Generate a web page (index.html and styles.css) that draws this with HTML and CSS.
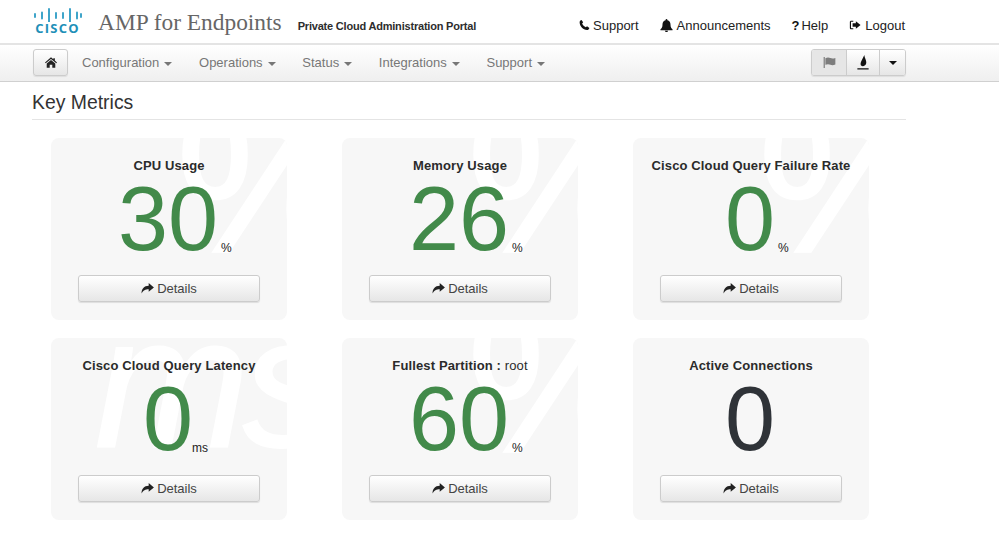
FILE: index.html
```html
<!DOCTYPE html>
<html lang="en">
<head>
<meta charset="utf-8">
<title>Key Metrics</title>
<link rel="stylesheet" href="styles.css">
</head>
<body>
<svg class="defs" width="0" height="0" aria-hidden="true">
  <symbol id="i-phone" viewBox="0 0 14 14"><path d="M3.2.6 5.3 3.6 4 5.2c.9 2 2.600 3.800 4.700 4.800l1.500-1.400 3 2.100c-.4 1.500-1.500 2.600-3 2.600C5 13.300.7 8.500.8 3.300.8 2 1.800 1 3.200.6z"/></symbol>
  <symbol id="i-bell" viewBox="0 0 14 14"><path d="M7 0c.6 0 1 .4 1 1v.3c2.200.5 3.300 2.300 3.300 4.500 0 2.800.8 4 2.200 5.200v1H.5v-1c1.400-1.200 2.200-2.400 2.200-5.200C2.700 3.600 3.800 1.800 6 1.300V1c0-.6.4-1 1-1zM5.300 12.600h3.400C8.600 13.500 7.900 14 7 14s-1.600-.5-1.700-1.400z"/></symbol>
  <symbol id="i-logout" viewBox="0 0 14 14"><path d="M5 2H2.600C1.700 2 1 2.700 1 3.600v6.800c0 .9.700 1.600 1.600 1.600H5v-1.300H2.800c-.3 0-.5-.2-.5-.5V3.800c0-.3.200-.5.500-.5H5z"/><path d="M8 2.500 13.500 7 8 11.500V9H4.200V5H8z"/></symbol>
  <symbol id="i-home" viewBox="0 0 14 12"><path d="M7 0 9.700 2.300V1h1.800v2.800L14 6l-.8.900L7 1.800.8 6.900 0 6z"/><path d="M7 3 12 7.100V12H8.500V8.500h-3V12H2V7.100z"/></symbol>
  <symbol id="i-flag" viewBox="0 0 14 12"><path d="M.6 0h1.300v12H.6z"/><path d="M2.500 1.300C5 .2 6.500.6 8 1.200s3 .7 5.400-.2v7.200c-2.400 1-4 .9-5.400.3s-3-1-5.500 0z"/></symbol>
  <symbol id="i-fire" viewBox="0 0 12 16"><path d="M7.400 0C7.600 3 9.500 4.800 9.500 7.800c0 2.600-1.500 4.100-3.500 4.100-.9 0-1.700-.3-2.300-.9C2.600 8 5.500 4.500 7.400 0z"/><path d="M0 14.200h12v1.300H0z"/></symbol>
  <symbol id="i-share" viewBox="0 0 14 12"><path d="M8.300 0 14 4.800 8.300 9.600V6.700C4.800 6.700 2.300 7.700.5 11.500.5 6.400 3.200 3 8.300 3z"/></symbol>
</svg>

<header class="topbar">
  <div class="brand">
    <div class="logo">
      <svg class="logo-bars" viewBox="0 0 48 14" width="48" height="14" aria-hidden="true">
        <g stroke="#2a9bc4" stroke-width="1.800" stroke-linecap="round">
          <path d="M1 6v3M8 4.500v6M15 1v13M22 5v5M29 5v5M36 1v13M43 4.500v6M47 6v3"/>
        </g>
      </svg>
      <span class="logo-word">CISCO</span>
    </div>
    <span class="product">AMP for Endpoints</span>
    <span class="portal">Private Cloud Administration Portal</span>
  </div>
  <nav class="toplinks">
    <a class="toplink"><svg class="ico"><use href="#i-phone"/></svg>Support</a>
    <a class="toplink"><svg class="ico ico-bell"><use href="#i-bell"/></svg>Announcements</a>
    <a class="toplink"><b class="qmark">?</b>Help</a>
    <a class="toplink"><svg class="ico ico-logout"><use href="#i-logout"/></svg>Logout</a>
  </nav>
</header>

<div class="navbar">
  <div class="navbar-inner">
    <button class="home-btn" aria-label="Home"><svg class="ico-home"><use href="#i-home"/></svg></button>
    <ul class="menu">
      <li>Configuration<i class="caret"></i></li>
      <li>Operations<i class="caret"></i></li>
      <li>Status<i class="caret"></i></li>
      <li>Integrations<i class="caret"></i></li>
      <li>Support<i class="caret"></i></li>
    </ul>
    <div class="btn-group">
      <button class="grp-btn grp-flag" aria-label="Flag"><svg class="ico-flag"><use href="#i-flag"/></svg></button>
      <button class="grp-btn grp-fire" aria-label="Fire"><svg class="ico-fire"><use href="#i-fire"/></svg></button>
      <button class="grp-btn grp-caret" aria-label="More"><i class="caret caret-dark"></i></button>
    </div>
  </div>
</div>

<main class="page">
  <h1 class="page-title">Key Metrics</h1>
  <section class="cards">
    <article class="card">
      <span class="mark mark-pct">%</span>
      <h2 class="card-title">CPU Usage</h2>
      <div class="value"><span class="num">30</span><span class="unit">%</span></div>
      <button class="details"><svg class="ico-share"><use href="#i-share"/></svg>Details</button>
    </article>
    <article class="card">
      <span class="mark mark-pct">%</span>
      <h2 class="card-title">Memory Usage</h2>
      <div class="value"><span class="num">26</span><span class="unit">%</span></div>
      <button class="details"><svg class="ico-share"><use href="#i-share"/></svg>Details</button>
    </article>
    <article class="card">
      <span class="mark mark-pct">%</span>
      <h2 class="card-title">Cisco Cloud Query Failure Rate</h2>
      <div class="value"><span class="num">0</span><span class="unit">%</span></div>
      <button class="details"><svg class="ico-share"><use href="#i-share"/></svg>Details</button>
    </article>
    <article class="card">
      <span class="mark mark-ms">ms</span>
      <h2 class="card-title">Cisco Cloud Query Latency</h2>
      <div class="value"><span class="num">0</span><span class="unit unit-ms">ms</span></div>
      <button class="details"><svg class="ico-share"><use href="#i-share"/></svg>Details</button>
    </article>
    <article class="card">
      <span class="mark mark-pct">%</span>
      <h2 class="card-title">Fullest Partition : <span class="card-title-light">root</span></h2>
      <div class="value"><span class="num">60</span><span class="unit">%</span></div>
      <button class="details"><svg class="ico-share"><use href="#i-share"/></svg>Details</button>
    </article>
    <article class="card">
      <h2 class="card-title">Active Connections</h2>
      <div class="value"><span class="num num-dark">0</span><span class="unit"></span></div>
      <button class="details"><svg class="ico-share"><use href="#i-share"/></svg>Details</button>
    </article>
  </section>
</main>
</body>
</html>
```

FILE: styles.css
```css
* { box-sizing: border-box; }
html, body { margin: 0; padding: 0; }
body {
  background: #fff;
  color: #2b2b2b;
  font-family: "Liberation Sans", Arial, sans-serif;
  font-size: 13px;
  overflow: hidden;
}
.defs { position: absolute; }

.topbar {
  height: 45px;
  padding: 0 94px 0 33px;
  border-bottom: 2px solid #e4e4e4;
  display: flex;
  align-items: center;
  justify-content: space-between;
}
.brand { display: flex; align-items: center; }
.logo {
  width: 49px;
  display: flex;
  flex-direction: column;
  align-items: center;
  margin-right: 16px;
}
.logo-bars { display: block; }
.logo-word {
  font-family: "Open Sans", "Liberation Sans", sans-serif;
  font-weight: 700;
  font-size: 13px;
  line-height: 13px;
  letter-spacing: 1.2px;
  color: #1e90b8;
}
.product {
  font-family: "Liberation Serif", "Times New Roman", serif;
  font-size: 23.400px;
  color: #666;
  margin-right: 16px;
  padding-top: 2px;
}
.portal {
  font-size: 11px;
  letter-spacing: -.2px;
  font-weight: 700;
  color: #2d2d2d;
  padding-top: 9px;
}
.toplinks { display: flex; gap: 21px; padding-top: 7px; }
.toplink {
  display: flex;
  align-items: center;
  color: #222;
  font-size: 13px;
  white-space: nowrap;
}
.ico { width: 11px; height: 12px; margin-right: 3px; fill: #111; }
.ico-bell { width: 13px; height: 13px; margin-right: 4px; }
.ico-logout { width: 12px; margin-right: 4px; }
.qmark { margin-right: 2px; color: #111; }

.navbar {
  height: 37px;
  background: linear-gradient(#fff, #efefef);
  border-bottom: 1px solid #d0d0d0;
  padding: 4px 93px 0 33px;
}
.navbar-inner { display: flex; align-items: flex-start; }
.home-btn {
  width: 35px;
  height: 27px;
  padding: 0;
  border: 1px solid #ccc;
  border-radius: 3px;
  background: linear-gradient(#fff, #e6e6e6);
  box-shadow: 0 1px 1px rgba(0,0,0,.08);
  display: flex;
  align-items: center;
  justify-content: center;
}
.ico-home { width: 12px; height: 11px; fill: #222; }
.menu {
  list-style: none;
  margin: 0 0 0 14px;
  padding: 0;
  display: flex;
  gap: 26.700px;
  flex: 1;
  color: #777;
  font-size: 13px;
  line-height: 27px;
}
.caret {
  display: inline-block;
  margin-left: 5px;
  vertical-align: middle;
  border-top: 4px solid #777;
  border-left: 4px solid transparent;
  border-right: 4px solid transparent;
}
.caret-dark { border-top-color: #111; margin: 0; }
.btn-group {
  display: flex;
  height: 27px;
  border: 1px solid #ccc;
  border-radius: 3px;
  overflow: hidden;
  box-shadow: 0 1px 1px rgba(0,0,0,.08);
}
.grp-btn {
  height: 100%;
  padding: 0;
  border: 0;
  display: flex;
  align-items: center;
  justify-content: center;
  background: linear-gradient(#fff, #e6e6e6);
}
.grp-flag { width: 35px; background: #e6e6e6; border-right: 1px solid #ccc; }
.grp-fire { width: 33px; border-right: 1px solid #ccc; }
.grp-caret { width: 25px; }
.ico-flag { width: 13px; height: 11px; fill: #7d7d7d; }
.ico-fire { width: 12px; height: 15px; fill: #111; }

.page { padding: 0 93px 0 32px; }
.page-title {
  margin: 0;
  height: 38px;
  font-size: 19.400px;
  line-height: 41px;
  font-weight: 400;
  color: #333;
  border-bottom: 1px solid #e4e4e4;
}
.cards {
  margin-top: 18px;
  padding-left: 19px;
  display: grid;
  grid-template-columns: repeat(3, 236px);
  column-gap: 55px;
  row-gap: 18px;
}
.card {
  position: relative;
  height: 182px;
  padding-top: 20px;
  background: #f7f7f7;
  border-radius: 8px;
  overflow: hidden;
  display: flex;
  flex-direction: column;
  align-items: center;
}
.mark {
  position: absolute;
  color: #fff;
  font-weight: 400;
  line-height: 1;
  white-space: nowrap;
  -webkit-text-stroke: 2px #fff;
}
.mark-pct { font-size: 205px; left: 125px; top: -60px; }
.mark-ms { font-size: 185px; font-style: italic; letter-spacing: -6px; left: 44px; top: -48px; }
.card-title {
  position: relative;
  margin: 0;
  height: 15px;
  font-size: 13px;
  line-height: 15px;
  font-weight: 700;
  color: #2b2b2b;
  letter-spacing: .13px;
  white-space: nowrap;
}
.card-title-light { font-weight: 400; }
.value {
  position: relative;
  width: 100%;
  height: 89px;
  margin-top: 2px;
  padding-right: 2px;
  display: grid;
  grid-template-columns: 1fr auto 1fr;
  align-items: end;
}
.num {
  grid-column: 2;
  font-size: 90px;
  line-height: 89px;
  color: #428a4a;
}
.num-dark { color: #2f3338; }
.unit {
  grid-column: 3;
  font-size: 12px;
  line-height: 14px;
  color: #222;
  padding: 0 0 9px 3px;
}
.unit-ms { padding-left: 0; margin-left: -1px; }
.details {
  position: relative;
  width: 182px;
  height: 27px;
  margin-top: 11px;
  padding: 0;
  border: 1px solid #ccc;
  border-radius: 3px;
  background: linear-gradient(#fff, #e6e6e6);
  box-shadow: 0 1px 1px rgba(0,0,0,.1);
  color: #444;
  font-family: inherit;
  font-size: 13px;
  display: flex;
  align-items: center;
  justify-content: center;
}
.ico-share { width: 13px; height: 11px; margin-right: 3px; fill: #222; }
```
